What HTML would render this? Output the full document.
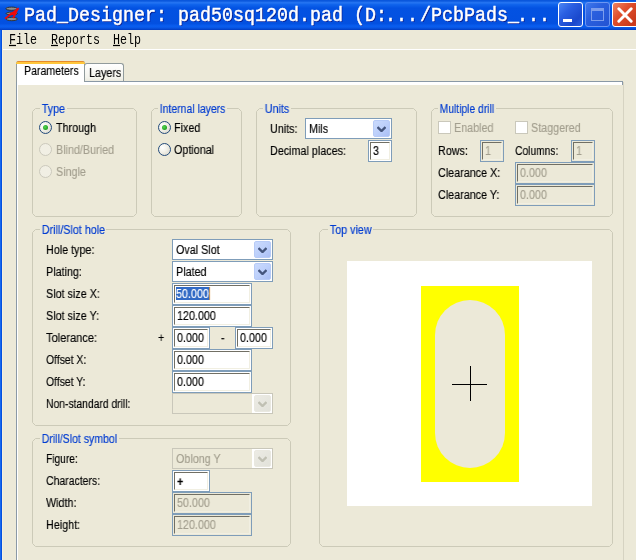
<!DOCTYPE html>
<html>
<head>
<meta charset="utf-8">
<title>Pad_Designer</title>
<style>
html,body{margin:0;padding:0;}
body{width:636px;height:560px;overflow:hidden;background:#ECE9D8;position:relative;
  font-family:"Liberation Sans",sans-serif;font-size:11px;color:#000;}
.abs{position:absolute;}
/* ---------- title bar ---------- */
#title{position:absolute;left:0;top:0;width:636px;height:30px;
  background:linear-gradient(to bottom,#0A57DC 0%,#0A57DC 3%,#2676F3 9%,#1064EC 15%,#0352E2 27%,#0350E0 78%,#0A5EF0 87%,#0856E4 93%,#023CC0 100%);}
#ttext{position:absolute;left:24px;top:4px;height:26px;line-height:26px;white-space:pre;
  font-family:"Liberation Mono",monospace;font-weight:normal;-webkit-text-stroke:.45px #fff;font-size:18.33px;color:#fff;
  transform-origin:0 50%;transform:scale(1,1.07);letter-spacing:0;will-change:transform;text-shadow:1px 1px 0 #0A1C8C;}
#ttext .dd{position:relative;left:-2px;}
.capb{position:absolute;top:2px;width:25px;height:25px;box-sizing:border-box;border:1px solid #fff;border-radius:3px;}
#lborder{position:absolute;left:0;top:30px;width:3px;height:530px;
  background:linear-gradient(to right,#1868EE 0,#1868EE 1px,#0450E0 1px,#0450E0 2px,#F6F0DC 2px,#F6F0DC 3px);}
/* ---------- menu ---------- */
#menuline{position:absolute;left:3px;top:49px;width:633px;height:1px;background:#fff;}
.mi{position:absolute;top:31.5px;height:16px;line-height:16px;white-space:pre;
  font-family:"Liberation Mono",monospace;font-size:11.67px;color:#000;
  transform-origin:0 50%;transform:scale(1,1.22);will-change:transform;}
.mi u{text-decoration:underline;}
/* ---------- tabs ---------- */
#pane{position:absolute;left:16px;top:81px;width:608px;height:490px;border:1px solid #8A99A6;border-right-color:#D6D3C2;
  background:#ECE9D8;box-sizing:border-box;box-shadow:inset 1px 0 0 #fff, inset 0 3px 0 #fff;}
.tab{position:absolute;box-sizing:border-box;}
#tab1{left:16px;top:61px;width:69px;height:21px;background:#fff;border:1px solid #919B9C;border-bottom:none;
  border-radius:3px 3px 0 0;}
#tab1:before{content:"";position:absolute;left:-1px;top:-1px;right:-1px;height:3px;border-radius:3px 3px 0 0;
  background:linear-gradient(to bottom,#E68B2C 0,#E68B2C 1px,#FFC73C 1px,#FFC73C 3px);}
#tab2{left:84px;top:63px;width:40px;height:18px;background:linear-gradient(#fff,#F3F3EC 80%,#ECEBE0);border:1px solid #919B9C;border-bottom:none;
  border-radius:3px 3px 0 0;}
.tab span{position:absolute;white-space:pre;height:13px;line-height:13px;}
.t,.gl,.in span,.cb span,.tab span{-webkit-text-stroke:.15px;font-size:12.3px;transform:scaleX(.875);transform-origin:0 0;will-change:transform;}
/* ---------- group boxes ---------- */
.gb{position:absolute;box-sizing:border-box;border:1px solid #D0D0BF;border-radius:4px;}
.gl{position:absolute;color:#003CD2;background:#ECE9D8;padding:0 2px;height:13px;line-height:13px;white-space:pre;}
.t{position:absolute;white-space:pre;height:13px;line-height:13px;margin-top:1px;}
.dis{color:#A39F8F;}
/* ---------- inputs ---------- */
.in{position:absolute;box-sizing:border-box;border:1px solid #7F9DB9;background:#fff;}
.in i{position:absolute;left:1px;top:1px;right:1px;bottom:1px;box-sizing:border-box;
  border:1px solid;border-color:#716F64 #F1EFE2 #F1EFE2 #716F64;}
.in span{position:absolute;left:3.5px;top:4px;height:13px;line-height:13px;white-space:pre;}
.in.d{background:#ECE9D8;color:#A39F8F;}
.in em{font-style:normal;font-weight:bold;position:relative;top:.5px;}
.in span.sel{background:#316AC5;color:#fff;box-shadow:1px 0 0 #E8A040;left:2.5px;top:3px;padding-top:1px;height:12px;}
/* ---------- combos ---------- */
.cb{position:absolute;box-sizing:border-box;border:1px solid #7F9DB9;background:#fff;height:21px;}
.cb span{position:absolute;left:3px;top:4px;height:13px;line-height:13px;white-space:pre;}
.cb b{position:absolute;right:1px;top:1px;width:17px;height:17px;box-sizing:border-box;border-radius:2px;
  border:1px solid #B7CBF7;background:linear-gradient(135deg,#CADAFD 0%,#BDD0FB 50%,#AABFF5 100%);}
.cb b svg{position:absolute;left:3px;top:5px;}
.cb.d{border-color:#C9C7BA;background:#ECE9D8;color:#A39F8F;}
.cb.d:before{content:"";position:absolute;right:0;top:0;width:20px;height:19px;background:#fff;}
.cb.d b{border-color:#E9E8E0;background:linear-gradient(135deg,#ECEBE4,#E2E2DA);}
/* ---------- radio / checkbox ---------- */
.rd{position:absolute;width:13px;height:13px;border-radius:50%;box-sizing:border-box;border:1px solid #21497A;
  background:radial-gradient(circle at 32% 32%,#fff 0%,#F3F2EB 40%,#D4D2C4 100%);}
.rd.on:after{content:"";position:absolute;left:3px;top:3px;width:5px;height:5px;border-radius:50%;
  background:radial-gradient(circle at 40% 40%,#55D551,#21A121 70%);}
.rd.d{border-color:#CAC8BB;background:#F1EFE4;}
.ck{position:absolute;width:13px;height:13px;box-sizing:border-box;border:1px solid #CAC8BB;background:#fff;}
</style>
</head>
<body>
<div id="title"></div>
<div id="ttext">Pad_Designer: pad50sq120d.pad (D:<span class="dd">...</span>/PcbPads_<span class="dd">...</span></div>
<div id="lborder"></div>
<div id="menuline"></div>
<div class="mi" style="left:9px"><u>F</u>ile</div>
<div class="mi" style="left:51px"><u>R</u>eports</div>
<div class="mi" style="left:113px"><u>H</u>elp</div>
<svg class="abs" style="left:0;top:0" width="26" height="30" viewBox="0 0 26 30">
  <g fill="#8E8E8E" stroke="#2A2A2A" stroke-width=".9">
  <ellipse cx="11.6" cy="8.7" rx="5.7" ry="1.6"/>
  <ellipse cx="11.8" cy="13.5" rx="5.7" ry="1.4"/>
  <ellipse cx="11.8" cy="19" rx="5.7" ry="1.7"/></g>
  <path d="M5 18.6 L18.8 8.3" stroke="#F00808" stroke-width="1.7" fill="none"/>
  <path d="M17.6 8.8 L13.2 18" stroke="#F00808" stroke-width="1.9" fill="none"/>
  <path d="M7.6 15.6 L11 12.4 L16.6 11.4 L15.4 14.8 Z" fill="#F00808"/>
</svg>
<div class="capb" style="left:558px;background:linear-gradient(135deg,#4C86F4 0%,#2A5FE2 35%,#1A48CC 75%,#2C60DE 100%);border-color:#fff">
  <div class="abs" style="left:4px;top:16px;width:9px;height:3px;background:#fff"></div></div>
<div class="capb" style="left:585px;background:linear-gradient(135deg,#3F78EC 0%,#2A5FDE 40%,#2353D2 100%);border-color:#6C96F2">
  <div class="abs" style="left:5px;top:5px;width:13px;height:13px;box-sizing:border-box;border:1px solid #7C9DEC;border-top-width:3px"></div></div>
<div class="capb" style="left:612px;width:30px;background:linear-gradient(135deg,#EE8464 0%,#E0502E 35%,#C8381A 80%,#D84826 100%);border-color:#fff">
  <svg class="abs" style="left:3.5px;top:3.5px" width="17" height="17" viewBox="0 0 17 17"><path d="M1.8 1.8 L14.2 14.2 M14.2 1.8 L1.8 14.2" stroke="#fff" stroke-width="2.9" stroke-linecap="round" fill="none"/></svg></div>

<div id="pane"></div><div class="abs" style="left:622px;top:81px;width:2px;height:1px;background:#ECE9D8"></div><div class="abs" style="left:622px;top:81px;width:1px;height:4px;background:#8A99A6"></div>
<div class="tab" id="tab2"><span style="left:4px;top:3px">Layers</span></div>
<div class="tab" id="tab1"><span style="left:7px;top:3px;transform:scaleX(.86)">Parameters</span></div>
<svg class="abs" style="left:32px;top:108px" width="105" height="109"><path d="M3.5 .5H101.5L104.5 3.5V105.5L101.5 108.5H3.5L.5 105.5V3.5Z" fill="none" stroke="#CCCAB8"/></svg><div class="gl" style="left:40px;top:103px">Type</div>
<div class="rd on" style="left:39px;top:121px"></div>
<div class="t " style="left:56px;top:121px">Through</div>
<div class="rd d" style="left:39px;top:143px"></div>
<div class="t dis" style="left:56px;top:143px">Blind/Buried</div>
<div class="rd d" style="left:39px;top:165px"></div>
<div class="t dis" style="left:56px;top:165px">Single</div>
<svg class="abs" style="left:151px;top:108px" width="91" height="109"><path d="M3.5 .5H87.5L90.5 3.5V105.5L87.5 108.5H3.5L.5 105.5V3.5Z" fill="none" stroke="#CCCAB8"/></svg><div class="gl" style="left:157.5px;top:103px;transform:scaleX(0.85)">Internal layers</div>
<div class="rd on" style="left:158px;top:121px"></div>
<div class="t " style="left:174px;top:121px">Fixed</div>
<div class="rd " style="left:158px;top:143px"></div>
<div class="t " style="left:174px;top:143px">Optional</div>
<svg class="abs" style="left:256px;top:108px" width="161" height="109"><path d="M3.5 .5H157.5L160.5 3.5V105.5L157.5 108.5H3.5L.5 105.5V3.5Z" fill="none" stroke="#CCCAB8"/></svg><div class="gl" style="left:263px;top:103px">Units</div>
<div class="t " style="left:270px;top:122px">Units:</div>
<div class="cb " style="left:305px;top:118px;width:87px"><span>Mils</span><b><svg width="9" height="6" viewBox="0 0 9 6"><path d="M0.5 1 L4.5 5 L8.5 1" fill="none" stroke="#44557D" stroke-width="2.4"/></svg></b></div>
<div class="t " style="left:270px;top:144px">Decimal places:</div>
<div class="in " style="left:368px;top:140px;width:24px;height:22px"><i></i><span>3</span></div>
<svg class="abs" style="left:431px;top:108px" width="182" height="109"><path d="M3.5 .5H178.5L181.5 3.5V105.5L178.5 108.5H3.5L.5 105.5V3.5Z" fill="none" stroke="#CCCAB8"/></svg><div class="gl" style="left:438px;top:103px;transform:scaleX(0.838)">Multiple drill</div>
<div class="ck" style="left:438px;top:121px"></div>
<div class="t dis" style="left:454px;top:121px">Enabled</div>
<div class="ck" style="left:515px;top:121px"></div>
<div class="t dis" style="left:531px;top:121px">Staggered</div>
<div class="t " style="left:438px;top:144px">Rows:</div>
<div class="in d" style="left:480px;top:140px;width:24px;height:22px"><i></i><span>1</span></div>
<div class="t " style="left:515px;top:144px;transform:scaleX(0.835)">Columns:</div>
<div class="in d" style="left:571px;top:140px;width:24px;height:22px"><i></i><span>1</span></div>
<div class="t " style="left:438px;top:166px">Clearance X:</div>
<div class="in d" style="left:515px;top:162px;width:80px;height:22px"><i></i><span>0.000</span></div>
<div class="t " style="left:438px;top:188px">Clearance Y:</div>
<div class="in d" style="left:515px;top:184px;width:80px;height:22px"><i></i><span>0.000</span></div>
<svg class="abs" style="left:32px;top:229px" width="259" height="197"><path d="M3.5 .5H255.5L258.5 3.5V193.5L255.5 196.5H3.5L.5 193.5V3.5Z" fill="none" stroke="#CCCAB8"/></svg><div class="gl" style="left:39.5px;top:224px">Drill/Slot hole</div>
<div class="t " style="left:46px;top:243px">Hole type:</div>
<div class="cb " style="left:172px;top:239px;width:101px"><span>Oval Slot</span><b><svg width="9" height="6" viewBox="0 0 9 6"><path d="M0.5 1 L4.5 5 L8.5 1" fill="none" stroke="#44557D" stroke-width="2.4"/></svg></b></div>
<div class="t " style="left:46px;top:265px">Plating:</div>
<div class="cb " style="left:172px;top:261px;width:101px"><span>Plated</span><b><svg width="9" height="6" viewBox="0 0 9 6"><path d="M0.5 1 L4.5 5 L8.5 1" fill="none" stroke="#44557D" stroke-width="2.4"/></svg></b></div>
<div class="t " style="left:46px;top:287px">Slot size X:</div>
<div class="in " style="left:172px;top:283px;width:80px;height:22px"><i></i><span class="sel">50.000</span></div>
<div class="t " style="left:46px;top:309px">Slot size Y:</div>
<div class="in " style="left:172px;top:305px;width:80px;height:22px"><i></i><span>120.000</span></div>
<div class="t " style="left:46px;top:331px;transform:scaleX(0.9)">Tolerance:</div>
<div class="t " style="left:158px;top:331px">+</div>
<div class="in " style="left:172px;top:327px;width:38px;height:22px"><i></i><span>0.000</span></div>
<div class="t " style="left:221px;top:331px">-</div>
<div class="in " style="left:235px;top:327px;width:38px;height:22px"><i></i><span>0.000</span></div>
<div class="t " style="left:46px;top:353px;transform:scaleX(0.845)">Offset X:</div>
<div class="in " style="left:172px;top:349px;width:80px;height:22px"><i></i><span>0.000</span></div>
<div class="t " style="left:46px;top:375px;transform:scaleX(0.845)">Offset Y:</div>
<div class="in " style="left:172px;top:371px;width:80px;height:22px"><i></i><span>0.000</span></div>
<div class="t " style="left:46px;top:397px;transform:scaleX(0.84)">Non-standard drill:</div>
<div class="cb d" style="left:172px;top:393px;width:101px"><span></span><b><svg width="9" height="6" viewBox="0 0 9 6"><path d="M0.5 1 L4.5 5 L8.5 1" fill="none" stroke="#C0C0B3" stroke-width="2.4"/></svg></b></div>
<svg class="abs" style="left:32px;top:438px" width="259" height="109"><path d="M3.5 .5H255.5L258.5 3.5V105.5L255.5 108.5H3.5L.5 105.5V3.5Z" fill="none" stroke="#CCCAB8"/></svg><div class="gl" style="left:39.5px;top:433px;transform:scaleX(0.855)">Drill/Slot symbol</div>
<div class="t " style="left:46px;top:452px;transform:scaleX(0.83)">Figure:</div>
<div class="cb d" style="left:172px;top:448px;width:101px"><span>Oblong Y</span><b><svg width="9" height="6" viewBox="0 0 9 6"><path d="M0.5 1 L4.5 5 L8.5 1" fill="none" stroke="#C0C0B3" stroke-width="2.4"/></svg></b></div>
<div class="t " style="left:46px;top:474px;transform:scaleX(0.85)">Characters:</div>
<div class="in " style="left:172px;top:470px;width:38px;height:22px"><i></i><span><em>+</em></span></div>
<div class="t " style="left:46px;top:496px">Width:</div>
<div class="in d" style="left:172px;top:492px;width:80px;height:22px"><i></i><span>50.000</span></div>
<div class="t " style="left:46px;top:518px">Height:</div>
<div class="in d" style="left:172px;top:514px;width:80px;height:22px"><i></i><span>120.000</span></div>
<svg class="abs" style="left:319px;top:229px" width="294" height="318"><path d="M3.5 .5H290.5L293.5 3.5V314.5L290.5 317.5H3.5L.5 314.5V3.5Z" fill="none" stroke="#CCCAB8"/></svg><div class="gl" style="left:328px;top:224px">Top view</div>
<div class="abs" style="left:347px;top:261px;width:245px;height:245px;background:#fff"></div>
<div class="abs" style="left:421px;top:286px;width:98px;height:196px;background:#FFFF00"></div>
<div class="abs" style="left:435px;top:300px;width:70px;height:168px;border-radius:35px;background:#ECE9D8"></div>
<div class="abs" style="left:452px;top:384px;width:35px;height:1px;background:#000"></div>
<div class="abs" style="left:470px;top:366px;width:1px;height:35px;background:#000"></div>

</body>
</html>
